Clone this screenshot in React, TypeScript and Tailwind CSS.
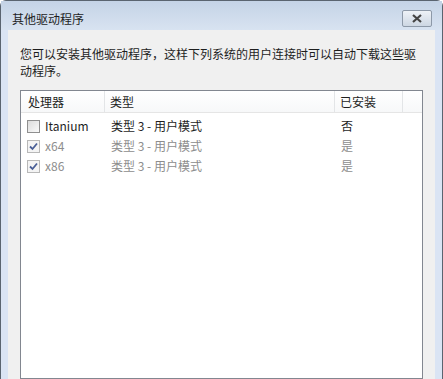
import { useState } from 'react';

const FONT = { fontFamily: '"Noto Sans CJK SC", "Noto Sans", sans-serif' };

type Row = { cpu: string; type: string; installed: string; checked: boolean; disabled: boolean };

const ROWS: Row[] = [
  { cpu: 'Itanium', type: '类型 3 - 用户模式', installed: '否', checked: false, disabled: false },
  { cpu: 'x64', type: '类型 3 - 用户模式', installed: '是', checked: true, disabled: true },
  { cpu: 'x86', type: '类型 3 - 用户模式', installed: '是', checked: true, disabled: true },
];

function Check({ checked, disabled }: { checked: boolean; disabled: boolean }) {
  return (
    <span
      className={`grid h-[13px] w-[13px] shrink-0 place-items-center border ${
        disabled ? 'border-[#b8b8b8] bg-[#f4f4f4]' : 'border-[#8f8f8f] bg-gradient-to-br from-[#dcdcdc] to-[#fafafa]'
      }`}
    >
      {checked && (
        <svg width="9" height="9" viewBox="0 0 9 9">
          <path d="M1 4.5 L3.5 7 L8 1.5" fill="none" stroke="#4a5f97" strokeWidth="1.8" />
        </svg>
      )}
    </span>
  );
}

export default function App() {
  const [rows] = useState(ROWS);
  return (
    <div className="h-[379px] w-[443px] overflow-hidden bg-white text-[12px]" style={FONT}>
      <div className="flex h-full flex-col rounded-t-[6px] border-t border-x border-[#5a6470] bg-[#dae4f4]">
        {/* Title bar */}
        <div className="flex h-[29px] shrink-0 items-center justify-between bg-gradient-to-b from-[#c4d3e6] to-[#d8e3f1] pl-[11px] pr-[10px]">
          <span className="pt-[6px] text-[12px] text-[#1e1e1e]">其他驱动程序</span>
          <button
            type="button"
            className="mt-[6px] grid h-[17px] w-[30px] place-items-center rounded-[2px] border border-[#8d99a8] bg-gradient-to-b from-[#eef2f7] to-[#cdd7e3]"
          >
            <svg width="12" height="9" viewBox="0 0 12 9">
              <path d="M2 1 L10 8 M10 1 L2 8" stroke="#444" strokeWidth="2.2" />
            </svg>
          </button>
        </div>

        {/* Body */}
        <div className="mx-[7px] flex flex-1 flex-col bg-[#f0f0f0] px-[12px] pt-[15px] text-[#1e1e1e]">
          <p className="leading-[17px]">
            您可以安装其他驱动程序，这样下列系统的用户连接时可以自动下载这些驱
            <br />
            动程序。
          </p>

          <div className="mt-[11px] flex-1 border border-[#828790] bg-white">
            <div className="flex h-[22px] border-b border-[#e5e5e5] bg-gradient-to-b from-white to-[#f7f8f9]">
              <div className="w-[84px] border-r border-[#e3e5e7] pl-[7px] leading-[22px]">处理器</div>
              <div className="w-[230px] border-r border-[#e3e5e7] pl-[5px] leading-[22px]">类型</div>
              <div className="w-[68px] border-r border-[#e3e5e7] pl-[5px] leading-[22px]">已安装</div>
              <div className="flex-1" />
            </div>
            <div className="pt-[3px]">
              {rows.map((r) => (
                <div
                  key={r.cpu}
                  className={`flex h-[20px] items-center ${r.disabled ? 'text-[#8d8d8d]' : 'text-[#1e1e1e]'}`}
                >
                  <div className="flex w-[85px] items-center gap-[5px] pl-[6px]">
                    <Check checked={r.checked} disabled={r.disabled} />
                    <span>{r.cpu}</span>
                  </div>
                  <div className="w-[230px] pl-[5px]">{r.type}</div>
                  <div className="pl-[5px]">{r.installed}</div>
                </div>
              ))}
            </div>
          </div>
        </div>
      </div>
    </div>
  );
}
